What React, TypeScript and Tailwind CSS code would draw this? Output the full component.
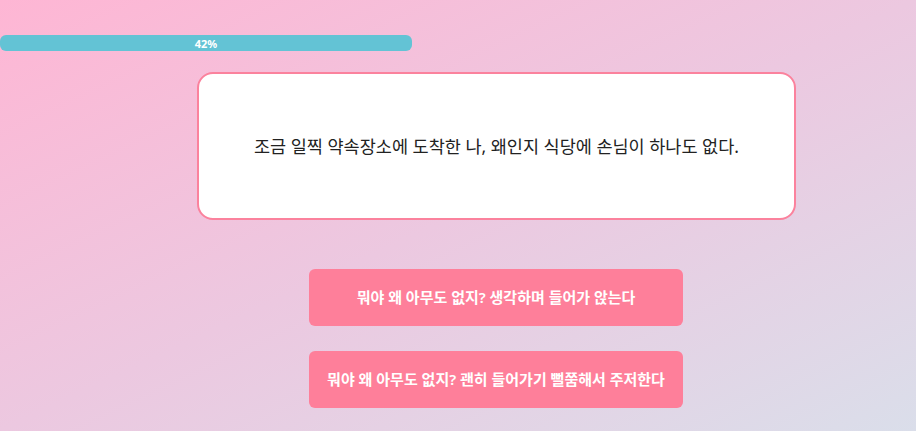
import React from "react";

const choices = [
  "뭐야 왜 아무도 없지? 생각하며 들어가 앉는다",
  "뭐야 왜 아무도 없지? 괜히 들어가기 뻘쭘해서 주저한다",
];

function ProgressBar({ percent }: { percent: number }) {
  return (
    <div className="w-[412px] h-[16px] rounded-[6px] bg-[#63c3d5] flex items-center justify-center">
      <span className="text-[11px] font-bold text-white leading-none">{percent}%</span>
    </div>
  );
}

export default function App() {
  return (
    <div
      className="w-[916px] h-[431px] overflow-hidden bg-gradient-to-br from-[#feb6d4] via-[#ecc8e0] to-[#dadeea] pt-[35px]"
      style={{ fontFamily: '"Noto Sans", "Noto Sans CJK KR", sans-serif' }}
    >
      <ProgressBar percent={42} />

      <div className="ml-[197px] mt-[21px] w-[599px] h-[148px] bg-white border-2 border-[#fb829d] rounded-[16px] flex items-center justify-center">
        <p className="text-[17.5px] text-[#222]">
          조금 일찍 약속장소에 도착한 나, 왜인지 식당에 손님이 하나도 없다.
        </p>
      </div>

      <div className="ml-[309px] mt-[49px] w-[374px] flex flex-col gap-[25px]">
        {choices.map((c) => (
          <button
            key={c}
            className="h-[57px] w-full rounded-[6px] bg-[#fe7f9a] text-white text-[15px] font-semibold flex items-center justify-center"
          >
            {c}
          </button>
        ))}
      </div>
    </div>
  );
}
